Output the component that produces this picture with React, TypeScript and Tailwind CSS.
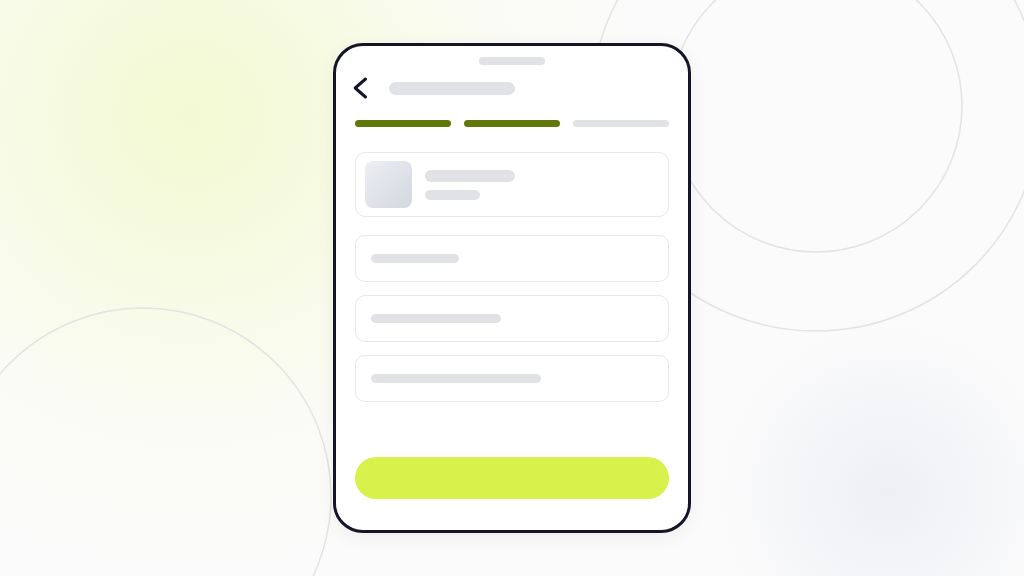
import type { ReactNode } from 'react';

function Bar({ className }: { className: string }) {
  return <div className={`rounded-full bg-[#e1e2e6] ${className}`} />;
}

function Field({ lineWidth }: { lineWidth: string }) {
  return (
    <div className="flex h-[47px] items-center rounded-[10px] border-[1.5px] border-[#e7e7e9] bg-white px-[15px]">
      <Bar className={`h-[9px] ${lineWidth}`} />
    </div>
  );
}

function Backdrop({ children }: { children: ReactNode }) {
  return (
    <div className="relative flex h-[576px] w-full items-center justify-center overflow-hidden bg-[#fbfbfb] font-['Inter',sans-serif]">
      <div className="pointer-events-none absolute inset-0 bg-[radial-gradient(circle_at_190px_115px,#f2f9d2_0px,#f7fbe4_170px,#fbfbf6_330px,transparent_460px)]" />
      <div className="pointer-events-none absolute inset-0 bg-[radial-gradient(circle_at_888px_493px,#edeff3_0px,#f4f5f8_80px,transparent_180px)]" />
      <svg
        className="pointer-events-none absolute inset-0"
        width="1024"
        height="576"
        viewBox="0 0 1024 576"
        fill="none"
      >
        <circle cx="816" cy="106" r="146" stroke="#e3e3e3" strokeWidth="1.5" />
        <circle cx="816" cy="106" r="225" stroke="#e3e3e3" strokeWidth="1.5" />
        <circle cx="143" cy="496" r="188" stroke="#e3e3e3" strokeWidth="1.5" />
      </svg>
      <div className="relative">{children}</div>
    </div>
  );
}

export default function App() {
  return (
    <Backdrop>
      <div className="flex h-[490px] w-[358px] flex-col rounded-[30px] border-[3px] border-[#15152a] bg-white px-[19px] pt-[11px] shadow-[0_4px_18px_rgba(0,0,0,0.06)]">
        <div className="mx-auto h-2 w-[66px] rounded-full bg-[#e1e2e6]" />

        <div className="mt-[11px] flex h-6 items-center">
          <svg width="16" height="22" viewBox="0 0 16 22" fill="none" className="-ml-[3px]">
            <path
              d="M13.5 2 3.2 11l10.3 9"
              stroke="#15152a"
              strokeWidth="3"
              strokeLinecap="round"
              strokeLinejoin="round"
            />
          </svg>
          <Bar className="ml-[21px] h-[13px] w-[126px]" />
        </div>

        <div className="mt-5 flex gap-[13px]">
          <div className="h-[7px] flex-1 rounded-full bg-[#5f7807]" />
          <div className="h-[7px] flex-1 rounded-full bg-[#5f7807]" />
          <div className="h-[7px] flex-1 rounded-full bg-[#e1e2e6]" />
        </div>

        <div className="mt-[25px] flex h-[65px] items-center gap-[13px] rounded-[10px] border-[1.5px] border-[#e7e7e9] px-[9px]">
          <div className="h-[47px] w-[47px] rounded-[8px] bg-[linear-gradient(135deg,#eceef2,#d3d7df)]" />
          <div className="flex flex-col gap-2">
            <Bar className="h-3 w-[90px]" />
            <Bar className="h-[10px] w-[55px]" />
          </div>
        </div>

        <div className="mt-[18px] flex flex-col gap-[13px]">
          <Field lineWidth="w-[88px]" />
          <Field lineWidth="w-[130px]" />
          <Field lineWidth="w-[170px]" />
        </div>

        <div className="mt-[55px] h-[42px] rounded-full bg-[#d8f24b]" />
      </div>
    </Backdrop>
  );
}
